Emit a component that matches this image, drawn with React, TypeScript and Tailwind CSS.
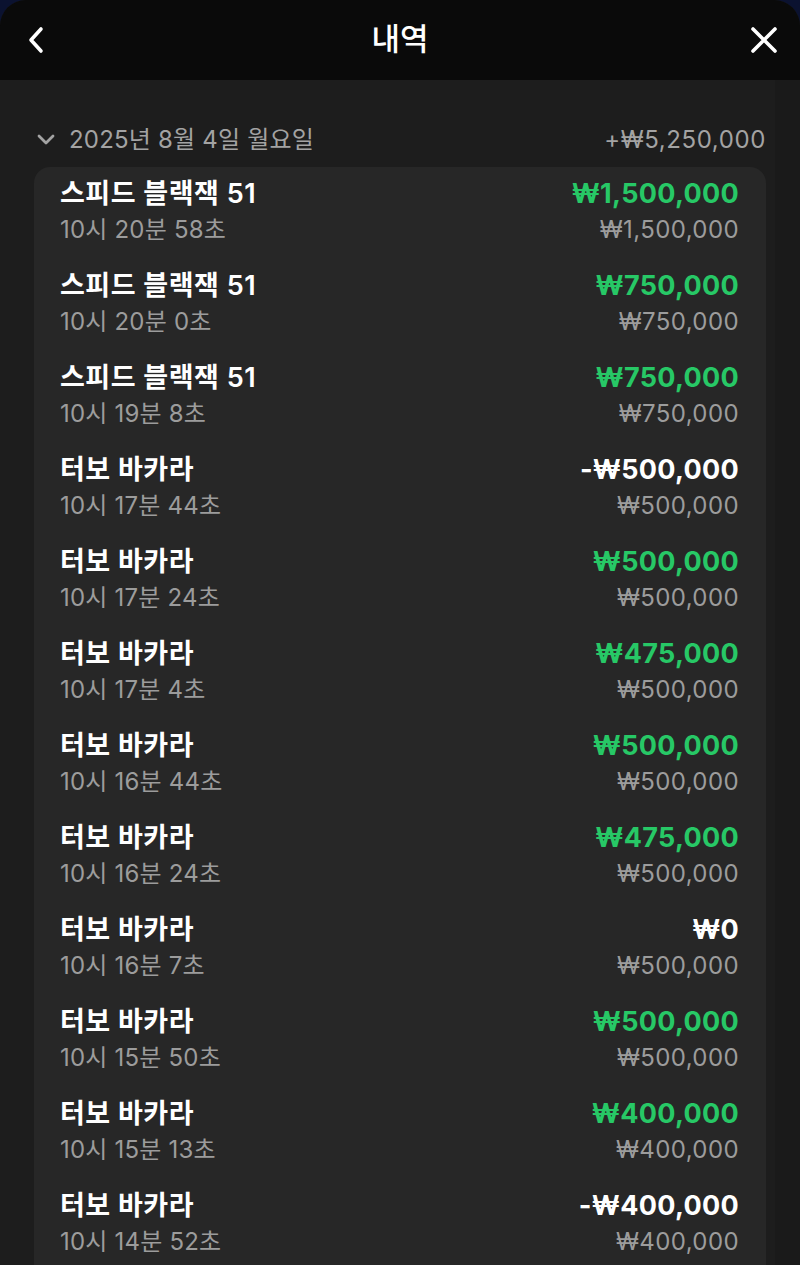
import React from "react";

type Row = { name: string; time: string; amount: string; bet: string; tone: "green" | "white" };

const rows: Row[] = [
  { name: "스피드 블랙잭 51", time: "10시 20분 58초", amount: "₩1,500,000", bet: "₩1,500,000", tone: "green" },
  { name: "스피드 블랙잭 51", time: "10시 20분 0초", amount: "₩750,000", bet: "₩750,000", tone: "green" },
  { name: "스피드 블랙잭 51", time: "10시 19분 8초", amount: "₩750,000", bet: "₩750,000", tone: "green" },
  { name: "터보 바카라", time: "10시 17분 44초", amount: "-₩500,000", bet: "₩500,000", tone: "white" },
  { name: "터보 바카라", time: "10시 17분 24초", amount: "₩500,000", bet: "₩500,000", tone: "green" },
  { name: "터보 바카라", time: "10시 17분 4초", amount: "₩475,000", bet: "₩500,000", tone: "green" },
  { name: "터보 바카라", time: "10시 16분 44초", amount: "₩500,000", bet: "₩500,000", tone: "green" },
  { name: "터보 바카라", time: "10시 16분 24초", amount: "₩475,000", bet: "₩500,000", tone: "green" },
  { name: "터보 바카라", time: "10시 16분 7초", amount: "₩0", bet: "₩500,000", tone: "white" },
  { name: "터보 바카라", time: "10시 15분 50초", amount: "₩500,000", bet: "₩500,000", tone: "green" },
  { name: "터보 바카라", time: "10시 15분 13초", amount: "₩400,000", bet: "₩400,000", tone: "green" },
  { name: "터보 바카라", time: "10시 14분 52초", amount: "-₩400,000", bet: "₩400,000", tone: "white" },
];

export default function App() {
  return (
    <div
      className="w-[800px] h-[1265px] overflow-hidden bg-[#0b1230]"
      style={{ fontFamily: '"Inter", "Noto Sans CJK KR", sans-serif' }}
    >
      <div className="h-full rounded-t-[26px] overflow-hidden flex flex-col bg-[#1d1d1d]">
        <header className="h-[80px] shrink-0 bg-[#0a0a0a] flex items-center justify-between px-[24px] relative">
          <svg width="22" height="30" viewBox="0 0 22 30" className="ml-[2px]">
            <path d="M15 4 L5 15 L15 26" stroke="white" strokeWidth="3.6" fill="none" strokeLinecap="round" strokeLinejoin="round" />
          </svg>
          <div className="absolute left-0 right-0 text-center text-white text-[31px] font-medium leading-[40px] top-[19px]">
            내역
          </div>
          <svg width="30" height="30" viewBox="0 0 30 30" className="mr-[-3px]">
            <path d="M4 4 L26 26 M26 4 L4 26" stroke="white" strokeWidth="3.6" fill="none" strokeLinecap="round" />
          </svg>
        </header>
        <div className="flex flex-1 min-h-0">
          <div className="flex-1 pl-[34px] pr-[9px] pt-[44px]">
            <div className="flex items-center justify-between h-[32px] mb-[11px]">
              <div className="flex items-center gap-[12px] text-[#a3a3a3] text-[24px] leading-[32px] tracking-[0.2px]">
                <svg width="22" height="14" viewBox="0 0 22 14" className="ml-[1px]">
                  <path d="M4 3 L11 10 L18 3" stroke="#a3a3a3" strokeWidth="2.8" fill="none" strokeLinecap="round" strokeLinejoin="round" />
                </svg>
                <span>2025년 8월 4일 월요일</span>
              </div>
              <span className="text-[#a3a3a3] text-[24px] leading-[32px] tracking-[0.6px]">+₩5,250,000</span>
            </div>
            <div className="bg-[#272727] rounded-[16px] pt-[9px] px-[26px] pr-[27px]">
              {rows.map((r, i) => (
                <div key={i} className="pb-[20px] flex justify-between">
                  <div>
                    <div className="text-white text-[27px] font-semibold leading-[36px] tracking-[0.5px]">{r.name}</div>
                    <div className="text-[#9c9c9c] text-[24px] leading-[36px] tracking-[0.2px]">{r.time}</div>
                  </div>
                  <div className="text-right">
                    <div
                      className={
                        r.tone === "green"
                          ? "text-[#27c866] text-[27px] font-bold leading-[36px] tracking-[0.3px]"
                          : "text-white text-[27px] font-bold leading-[36px] tracking-[0.3px]"
                      }
                    >
                      {r.amount}
                    </div>
                    <div className="text-[#9c9c9c] text-[24px] leading-[36px] tracking-[0.4px]">{r.bet}</div>
                  </div>
                </div>
              ))}
            </div>
          </div>
          <div className="w-[25px] shrink-0 bg-[#1a1a1a]" />
        </div>
      </div>
    </div>
  );
}
